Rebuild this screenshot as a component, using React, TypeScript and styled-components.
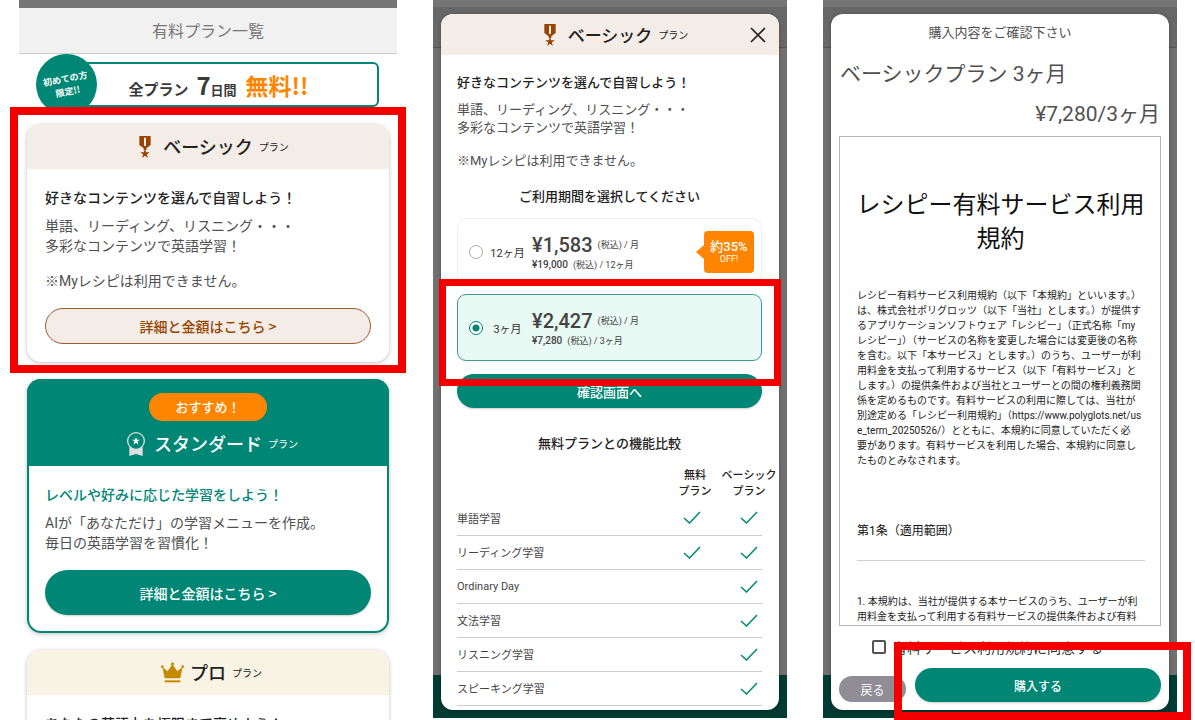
import React from "react";
import styled, { createGlobalStyle, css } from "styled-components";

const green = "#008675";
const orange = "#ff8500";
const brown = "#964400";
const red = "#f20000";
const jp = '"Noto Sans CJK JP", "Noto Sans", sans-serif';
const latin = 'Roboto, "Noto Sans CJK JP", sans-serif';

const GlobalStyle = createGlobalStyle`
  *, *::before, *::after { box-sizing: border-box; }
  body { margin: 0; background: #fff; color: #222; font-family: ${jp}; }
  h1, h2, h3, p { margin: 0; font-weight: 400; }
  button, input { font-family: inherit; margin: 0; }
`;

const Page = styled.main`
  display: grid;
  grid-template-columns: 378fr 354fr 354fr;
  grid-template-rows: minmax(0, 1fr);
  column-gap: 36px;
  height: 100vh;
  padding: 0 18px 0 19px;
  overflow: hidden;
`;

/* Red marker drawn around the spot to tap */
const Marked = styled.div<{ $grow?: boolean }>`
  position: relative;
  ${(p) => p.$grow && "flex: 1;"}
`;

const Marker = styled.div<{ $inset: string; $width: number }>`
  position: absolute;
  z-index: 3;
  inset: ${(p) => p.$inset};
  border: ${(p) => p.$width}px solid ${red};
  pointer-events: none;
`;

/* ---------- plan list screen ---------- */

const ListScreen = styled.section`
  min-width: 0;
`;

const ListHeader = styled.header`
  border-top: 8px solid #757575;
  border-bottom: 1px solid #ccc;
  background: #f1f1f1;
  text-align: center;
`;

const ListTitle = styled.h1`
  font-size: 16px;
  line-height: 45px;
  color: #777;
`;

const ListBody = styled.div`
  display: flex;
  flex-direction: column;
  gap: 17px;
  padding: 8px;
`;

const Campaign = styled.div`
  position: relative;
  display: flex;
  justify-content: center;
  align-items: baseline;
  height: 45px;
  margin: 0 10px 0 31px;
  border: 2px solid ${green};
  border-radius: 6px;
  line-height: 41px;
  font-weight: 700;
  color: #3a3a3a;
`;

const CampaignText = styled.span<{ $size: number; $gap?: number; $accent?: boolean }>`
  margin-left: ${(p) => p.$gap ?? 0}px;
  font-size: ${(p) => p.$size}px;
  color: ${(p) => (p.$accent ? orange : "inherit")};
`;

const FirstTimeBadge = styled.div`
  position: absolute;
  left: -24px;
  top: -10px;
  display: grid;
  place-content: center;
  width: 61px;
  height: 61px;
  border-radius: 50%;
  background: ${green};
  color: #fff;
  text-align: center;
  font-size: 9px;
  line-height: 13px;
  font-weight: 700;
`;

const Tilted = styled.span`
  transform: rotate(-11deg);
`;

const Card = styled.article<{ $outlined?: boolean }>`
  border-radius: 14px;
  background: #fff;
  box-shadow: ${(p) => (p.$outlined ? `inset 0 0 0 2px ${green}, ` : "")}0 1px 4px rgba(0, 0, 0, 0.25);
`;

const CardHead = styled.header<{ $bg: string; $color?: string }>`
  display: flex;
  flex-direction: column;
  align-items: center;
  border-radius: 14px 14px 0 0;
  background: ${(p) => p.$bg};
  color: ${(p) => p.$color ?? "#222"};
`;

const Recommended = styled.span`
  width: 118px;
  margin-top: 14px;
  border-radius: 14px;
  background: ${orange};
  text-align: center;
  font-size: 13px;
  line-height: 28px;
  font-weight: 500;
`;

const PlanName = styled.h2<{ $compact?: boolean }>`
  display: flex;
  align-items: center;
  gap: 6px;
  padding-left: 6px;
  font-size: ${(p) => (p.$compact ? 17 : 18)}px;
  line-height: ${(p) => (p.$compact ? 41 : 45)}px;
  font-weight: 500;
`;

const PlanSuffix = styled.small`
  font-size: 10px;
  font-weight: 400;
`;

const IconBox = styled.span`
  display: grid;
  place-items: center;
  width: 24px;
  height: 24px;
`;

const CardBody = styled.div`
  padding: 18px;
`;

const Lead = styled.h3<{ $compact?: boolean; $color?: string }>`
  margin-bottom: ${(p) => (p.$compact ? 10 : 9)}px;
  font-size: ${(p) => (p.$compact ? 13 : 14)}px;
  line-height: ${(p) => (p.$compact ? 18 : 20)}px;
  font-weight: 500;
  color: ${(p) => p.$color ?? "#222"};
`;

const Copy = styled.p<{ $compact?: boolean }>`
  font-family: ${latin};
  font-size: ${(p) => (p.$compact ? 13 : 14)}px;
  line-height: ${(p) => (p.$compact ? 18 : 20)}px;
  color: #505050;
  & + & {
    margin-top: 15px;
  }
`;

const PillButton = styled.button<{ $tone: "brown" | "green"; $height: number; $size: number }>`
  display: block;
  width: 100%;
  height: ${(p) => p.$height}px;
  padding: 0;
  border-radius: 24px;
  font-size: ${(p) => p.$size}px;
  font-weight: 500;
  cursor: pointer;
  ${(p) =>
    p.$tone === "brown"
      ? css`
          border: 1px solid #9c5a2a;
          background: #f4ece6;
          color: ${brown};
        `
      : css`
          border: 0;
          background: ${green};
          color: #fff;
          box-shadow: 0 1px 2px rgba(0, 0, 0, 0.2);
        `}
`;

const DetailButton = styled(PillButton)`
  margin-top: 17px;
`;

/* ---------- dialog screens ---------- */

const DialogScreen = styled.section`
  display: flex;
  min-width: 0;
  margin-bottom: 2px;
  padding: 14px 8px 8px;
  background: linear-gradient(#003c34, #003c34) bottom / 100% 43px no-repeat,
    linear-gradient(#757575 7px, #666 7px, #6a6a6a 47px, #555 47px, #555 48px, #717171 48px);
`;

const Dialog = styled.div<{ $padded?: boolean }>`
  display: flex;
  flex-direction: column;
  flex: 1;
  min-width: 0;
  border-radius: 12px;
  background: #fff;
  box-shadow: 0 1px 4px rgba(0, 0, 0, 0.3);
  ${(p) => p.$padded && "padding: 9px 8px 8px;"}
`;

const DialogHead = styled.header`
  position: relative;
  display: flex;
  justify-content: center;
  border-radius: 12px 12px 0 0;
  background: #f4ece6;
`;

const CloseButton = styled.button`
  position: absolute;
  right: 13px;
  top: 13px;
  display: grid;
  width: 16px;
  height: 16px;
  padding: 0;
  place-items: center;
  border: 0;
  background: none;
  color: #222;
`;

const DialogBody = styled.div`
  padding: 18px 17px 0 16px;
`;

const CenteredHeading = styled.h3<{ $top: number; $bottom: number }>`
  margin: ${(p) => p.$top}px 0 ${(p) => p.$bottom}px;
  text-align: center;
  font-size: 13px;
  line-height: 18px;
  font-weight: 500;
`;

const Options = styled.div`
  display: flex;
  flex-direction: column;
  gap: 9px;
  margin-bottom: 13px;
`;

const Option = styled.label<{ $selected?: boolean }>`
  display: flex;
  align-items: center;
  height: 67px;
  padding: 0 7px 0 11px;
  border: 1px solid ${(p) => (p.$selected ? "#3d9c8e" : "#eee")};
  border-radius: 9px;
  background: ${(p) => (p.$selected ? "#e9faf4" : "#fff")};
  font-family: ${latin};
`;

const Radio = styled.input`
  appearance: none;
  flex: none;
  width: 14px;
  height: 14px;
  border: 1px solid #aaa;
  border-radius: 50%;
  background: #fff;
  &:checked {
    border-color: ${green};
    background: radial-gradient(${green} 3px, #fff 4px);
  }
`;

const Term = styled.span`
  width: 49px;
  text-align: center;
  font-size: 11px;
  color: #333;
`;

const Prices = styled.span`
  display: flex;
  flex-direction: column;
  flex: 1;
  gap: 1px;
  padding-top: 2px;
`;

const PriceLine = styled.span<{ $main?: boolean }>`
  display: flex;
  align-items: center;
  gap: 5px;
  font-size: 9px;
  line-height: ${(p) => (p.$main ? 24 : 14)}px;
  color: #444;
`;

const Amount = styled.b<{ $main?: boolean }>`
  font-size: ${(p) => (p.$main ? 20 : 10)}px;
  font-weight: 500;
  color: #444;
`;

const Discount = styled.span`
  position: relative;
  display: flex;
  flex-direction: column;
  justify-content: center;
  width: 50px;
  height: 42px;
  border-radius: 4px;
  background: ${orange};
  color: #fff;
  text-align: center;
  font-size: 13px;
  line-height: 14px;
  font-weight: 500;
  &::before {
    content: "";
    position: absolute;
    left: -8px;
    top: 14px;
    border: 7px solid transparent;
    border-left: 0;
    border-right: 8px solid ${orange};
  }
`;

const Off = styled.small`
  font-size: 9px;
  line-height: 10px;
  font-weight: 400;
`;

const Comparison = styled.table`
  width: 100%;
  table-layout: fixed;
  border-collapse: collapse;
  font-size: 11px;
`;

const HeadCell = styled.th<{ $width?: number; $shift?: number }>`
  width: ${(p) => (p.$width ? `${p.$width}px` : "auto")};
  padding: 0 0 3px ${(p) => p.$shift ?? 0}px;
  line-height: 16px;
  font-weight: 500;
`;

const HeadLabel = styled.span`
  display: flex;
  justify-content: center;
  white-space: nowrap;
`;

const FeatureRow = styled.tr`
  height: 34px;
  border-bottom: 1px solid #ccc;
`;

const FeatureName = styled.th`
  padding: 0;
  text-align: left;
  font-family: ${latin};
  font-weight: 400;
  color: #444;
`;

const FeatureCell = styled.td`
  padding: 0;
  text-align: center;
  line-height: 0;
`;

/* ---------- purchase confirmation ---------- */

const ConfirmTitle = styled.h2`
  text-align: center;
  font-size: 13px;
  line-height: 18px;
  color: #505050;
`;

const Summary = styled.p<{ $top: number; $right?: boolean }>`
  margin-top: ${(p) => p.$top}px;
  padding: 0 1px;
  text-align: ${(p) => (p.$right ? "right" : "left")};
  font-family: ${latin};
  font-size: 21px;
  line-height: 28px;
  color: #505050;
`;

const TermsBox = styled.div`
  flex: 1;
  min-height: 0;
  margin-top: 8px;
  padding: 49px 15px 0 17px;
  border: 1px solid #b5b5b5;
  overflow: hidden;
  color: #111;
`;

const TermsTitle = styled.h3`
  margin: 0 -1px 34px -2px;
  text-align: center;
  font-size: 24px;
  line-height: 34px;
`;

const TermsText = styled.p`
  font-family: ${latin};
  font-size: 10px;
  line-height: 15px;
  color: #222;
`;

const Url = styled.span`
  word-break: break-all;
`;

const Clause = styled.h3`
  margin: 53px 0 33px;
  padding-bottom: 19px;
  border-bottom: 1px solid #d0d0d0;
  font-family: ${latin};
  font-size: 12px;
  line-height: 20px;
`;

const Agree = styled.label`
  display: flex;
  align-items: center;
  gap: 7px;
  margin: 11px 0 11px 33px;
  font-size: 14px;
  line-height: 20px;
  color: #333;
`;

const CheckBox = styled.input`
  appearance: none;
  width: 14px;
  height: 14px;
  border: 2px solid #555;
  border-radius: 2px;
`;

const Actions = styled.div`
  display: flex;
  align-items: flex-end;
  gap: 9px;
`;

const BackButton = styled.button`
  width: 67px;
  height: 26px;
  padding: 0;
  border: 0;
  border-radius: 13px;
  background: #908d96;
  color: #fff;
  font-size: 12px;
`;

/* ---------- icons ---------- */

const Medal = () => (
  <svg width="12" height="22" viewBox="0 0 36 66" aria-hidden="true">
    <path fill={brown} d="M1 0H35V27L22 37V42H14V37L1 27Z" />
    <path fill="#f4ece6" d="M15 5H21V30H15Z" />
    <path fill={brown} d="M18 39L21.5 49H32L23.500 55.200L26.700 66L18 59.500L9.300 66L12.500 55.200L4 49H14.500Z" />
  </svg>
);

const Rosette = () => (
  <svg width="18" height="24" viewBox="0 0 54 72" aria-hidden="true">
    <path fill="#dde0df" d="M7 44L27 50L47 44V72L27 66L7 72Z" />
    <circle cx="27" cy="27" r="25" fill={green} stroke="#dde0df" strokeWidth="4" />
    <path fill="#fff" d="M27 15L30 23.500H38.500L31.700 28.700L34.300 37.500L27 32.300L19.700 37.500L22.300 28.700L15.500 23.500H24Z" />
  </svg>
);

const Crown = () => (
  <svg width="23" height="21" viewBox="0 0 69 63" aria-hidden="true">
    <g fill="#c58a00">
      <path d="M4 15L20 28L34 6L49 28L65 15L58 49H11Z" />
      <circle cx="34.500" cy="5" r="4.500" />
      <circle cx="4" cy="14" r="4" />
      <circle cx="65" cy="14" r="4" />
      <path d="M11 55H58V61H11Z" />
    </g>
  </svg>
);

const Check = () => (
  <svg width="18" height="13" viewBox="0 0 18 13" role="img" aria-label="対応">
    <path d="M1 7L6.500 12L17 1" fill="none" stroke="#0b8a79" strokeWidth="1.6" />
  </svg>
);

const Cross = () => (
  <svg width="16" height="16" viewBox="0 0 16 16" aria-hidden="true">
    <path d="M1 1L15 15M15 1L1 15" stroke="currentColor" strokeWidth="1.7" />
  </svg>
);

/* ---------- shared pieces ---------- */

type PlanTitleProps = { icon: React.ReactNode; name: string; compact?: boolean };

const PlanTitle = ({ icon, name, compact }: PlanTitleProps) => (
  <PlanName $compact={compact}>
    <IconBox>{icon}</IconBox>
    {name}
    <PlanSuffix>プラン</PlanSuffix>
  </PlanName>
);

const features = [
  { name: "単語学習", free: true },
  { name: "リーディング学習", free: true },
  { name: "Ordinary Day", free: false },
  { name: "文法学習", free: false },
  { name: "リスニング学習", free: false },
  { name: "スピーキング学習", free: false },
];

const PlanList = () => (
  <ListScreen>
    <ListHeader>
      <ListTitle>有料プラン一覧</ListTitle>
    </ListHeader>
    <ListBody>
      <Campaign>
        <FirstTimeBadge>
          <Tilted>
            初めての方
            <br />
            限定!!
          </Tilted>
        </FirstTimeBadge>
        <CampaignText $size={15}>全プラン</CampaignText>
        <CampaignText $size={24} $gap={8}>7</CampaignText>
        <CampaignText $size={13}>日間</CampaignText>
        <CampaignText $size={23} $gap={9} $accent>無料!!</CampaignText>
      </Campaign>

      <Marked>
        <Card>
          <CardHead $bg="#f4ece6">
            <PlanTitle icon={<Medal />} name="ベーシック" />
          </CardHead>
          <CardBody>
            <Lead>好きなコンテンツを選んで自習しよう！</Lead>
            <Copy>
              単語、リーディング、リスニング・・・
              <br />
              多彩なコンテンツで英語学習！
            </Copy>
            <Copy>※Myレシピは利用できません。</Copy>
            <DetailButton $tone="brown" $height={36} $size={14}>詳細と金額はこちら &gt;</DetailButton>
          </CardBody>
        </Card>
        <Marker $inset="-17px -17px -11px" $width={8} />
      </Marked>

      <Card $outlined>
        <CardHead $bg={green} $color="#fff">
          <Recommended>おすすめ！</Recommended>
          <PlanTitle icon={<Rosette />} name="スタンダード" />
        </CardHead>
        <CardBody>
          <Lead $color={green}>レベルや好みに応じた学習をしよう！</Lead>
          <Copy>
            AIが「あなただけ」の学習メニューを作成。
            <br />
            毎日の英語学習を習慣化！
          </Copy>
          <DetailButton $tone="green" $height={45} $size={14}>詳細と金額はこちら &gt;</DetailButton>
        </CardBody>
      </Card>

      <Card>
        <CardHead $bg="#f9f3e5">
          <PlanTitle icon={<Crown />} name="プロ" />
        </CardHead>
        <CardBody>
          <Lead>あなたの英語力を極限まで高めよう！</Lead>
        </CardBody>
      </Card>
    </ListBody>
  </ListScreen>
);

const PlanDialog = () => (
  <DialogScreen>
    <Dialog>
      <DialogHead>
        <PlanTitle icon={<Medal />} name="ベーシック" compact />
        <CloseButton aria-label="閉じる">
          <Cross />
        </CloseButton>
      </DialogHead>
      <DialogBody>
        <Lead $compact>好きなコンテンツを選んで自習しよう！</Lead>
        <Copy $compact>
          単語、リーディング、リスニング・・・
          <br />
          多彩なコンテンツで英語学習！
        </Copy>
        <Copy $compact>※Myレシピは利用できません。</Copy>
        <CenteredHeading $top={17} $bottom={13}>ご利用期間を選択してください</CenteredHeading>
        <Options>
          <Option>
            <Radio type="radio" name="term" value="12" />
            <Term>12ヶ月</Term>
            <Prices>
              <PriceLine $main>
                <Amount $main>¥1,583</Amount>(税込) / 月
              </PriceLine>
              <PriceLine>
                <Amount>¥19,000</Amount>(税込) / 12ヶ月
              </PriceLine>
            </Prices>
            <Discount>
              約35%
              <Off>OFF!</Off>
            </Discount>
          </Option>
          <Marked>
            <Option $selected>
              <Radio type="radio" name="term" value="3" defaultChecked />
              <Term>3ヶ月</Term>
              <Prices>
                <PriceLine $main>
                  <Amount $main>¥2,427</Amount>(税込) / 月
                </PriceLine>
                <PriceLine>
                  <Amount>¥7,280</Amount>(税込) / 3ヶ月
                </PriceLine>
              </Prices>
            </Option>
            <Marker $inset="-15px -19px -25px -18px" $width={7} />
          </Marked>
        </Options>
        <PillButton $tone="green" $height={34} $size={13}>確認画面へ</PillButton>
        <CenteredHeading $top={26} $bottom={14}>無料プランとの機能比較</CenteredHeading>
        <Comparison>
          <thead>
            <tr>
              <HeadCell aria-label="機能" />
              <HeadCell $width={88} $shift={6}>
                <HeadLabel>無料</HeadLabel>
                <HeadLabel>プラン</HeadLabel>
              </HeadCell>
              <HeadCell $width={26}>
                <HeadLabel>ベーシック</HeadLabel>
                <HeadLabel>プラン</HeadLabel>
              </HeadCell>
            </tr>
          </thead>
          <tbody>
            {features.map((f) => (
              <FeatureRow key={f.name}>
                <FeatureName scope="row">{f.name}</FeatureName>
                <FeatureCell>{f.free && <Check />}</FeatureCell>
                <FeatureCell>
                  <Check />
                </FeatureCell>
              </FeatureRow>
            ))}
          </tbody>
        </Comparison>
      </DialogBody>
    </Dialog>
  </DialogScreen>
);

const ConfirmDialog = () => (
  <DialogScreen>
    <Dialog $padded>
      <ConfirmTitle>購入内容をご確認下さい</ConfirmTitle>
      <Summary $top={19}>ベーシックプラン 3ヶ月</Summary>
      <Summary $top={12} $right>¥7,280/3ヶ月</Summary>
      <TermsBox>
        <TermsTitle>レシピー有料サービス利用規約</TermsTitle>
        <TermsText>
          レシピー有料サービス利用規約（以下「本規約」といいます。）は、株式会社ポリグロッツ（以下「当社」とします。）が提供するアプリケーションソフトウェア「レシピー」（正式名称「myレシピー」）（サービスの名称を変更した場合には変更後の名称を含む。以下「本サービス」とします。）のうち、ユーザーが利用料金を支払って利用するサービス（以下「有料サービス」とします。）の提供条件および当社とユーザーとの間の権利義務関係を定めるものです。有料サービスの利用に際しては、当社が別途定める「レシピー利用規約」（<Url>https://www.polyglots.net/use_term_20250526/</Url>）とともに、本規約に同意していただく必<br />要があります。有料サービスを利用した場合、本規約に同意したものとみなされます。
        </TermsText>
        <Clause>第1条（適用範囲）</Clause>
        <TermsText>
          1. 本規約は、当社が提供する本サービスのうち、ユーザーが利用料金を支払って利用する有料サービスの提供条件および有料
        </TermsText>
      </TermsBox>
      <Agree>
        <CheckBox type="checkbox" />
        有料サービス利用規約に同意する
      </Agree>
      <Actions>
        <BackButton>戻る</BackButton>
        <Marked $grow>
          <PillButton $tone="green" $height={34} $size={12}>購入する</PillButton>
          <Marker $inset="-26px -30px -18px -21px" $width={8} />
        </Marked>
      </Actions>
    </Dialog>
  </DialogScreen>
);

export default function App() {
  return (
    <>
      <GlobalStyle />
      <Page>
        <PlanList />
        <PlanDialog />
        <ConfirmDialog />
      </Page>
    </>
  );
}
